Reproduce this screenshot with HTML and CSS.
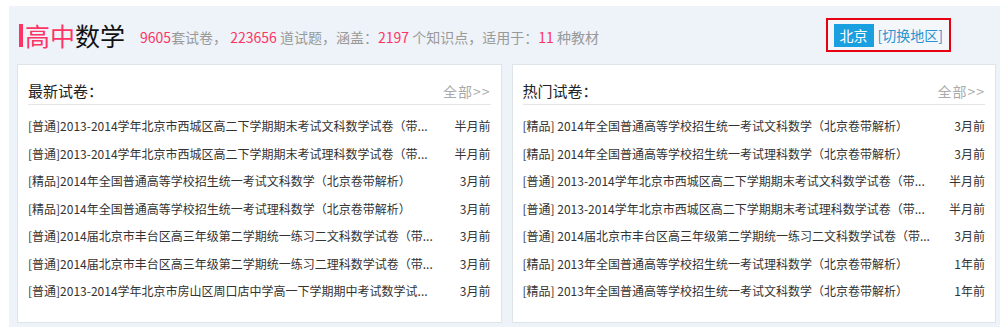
FILE: index.html
```html
<!DOCTYPE html>
<html lang="zh-CN">
<head>
    <meta charset="UTF-8">
    <title>高中数学</title>
    <link rel="stylesheet" href="styles.css">
</head>
<body>
    <div class="wrap">
        <!-- Subject header -->
        <div class="subject-head">
            <div class="subject-title">
                <span class="bar"></span>
                <h1><span class="hl">高中</span>数学</h1>
                <p class="stats">
                    <em>9605</em>套试卷， <em>223656</em> 道试题，涵盖：<em>2197</em> 个知识点，适用于：<em>11</em> 种教材
                </p>
            </div>
            <div class="region">
                <span class="region-name">北京</span>
                <a class="region-switch" href="#">[切换地区]</a>
            </div>
        </div>

        <!-- Paper lists -->
        <div class="lists">
            <div class="card">
                <div class="card-head">
                    <h2>最新试卷：</h2>
                    <a class="more" href="#">全部&gt;&gt;</a>
                </div>
                <ul class="paper-list">
                    <li><a href="#">[普通]2013-2014学年北京市西城区高二下学期期末考试文科数学试卷（带...</a><span>半月前</span></li>
                    <li><a href="#">[普通]2013-2014学年北京市西城区高二下学期期末考试理科数学试卷（带...</a><span>半月前</span></li>
                    <li><a href="#">[精品]2014年全国普通高等学校招生统一考试文科数学（北京卷带解析）</a><span>3月前</span></li>
                    <li><a href="#">[精品]2014年全国普通高等学校招生统一考试理科数学（北京卷带解析）</a><span>3月前</span></li>
                    <li><a href="#">[普通]2014届北京市丰台区高三年级第二学期统一练习二文科数学试卷（带...</a><span>3月前</span></li>
                    <li><a href="#">[普通]2014届北京市丰台区高三年级第二学期统一练习二理科数学试卷（带...</a><span>3月前</span></li>
                    <li><a href="#">[普通]2013-2014学年北京市房山区周口店中学高一下学期期中考试数学试...</a><span>3月前</span></li>
                </ul>
            </div>
            <div class="card">
                <div class="card-head">
                    <h2>热门试卷：</h2>
                    <a class="more" href="#">全部&gt;&gt;</a>
                </div>
                <ul class="paper-list">
                    <li><a href="#">[精品] 2014年全国普通高等学校招生统一考试文科数学（北京卷带解析）</a><span>3月前</span></li>
                    <li><a href="#">[精品] 2014年全国普通高等学校招生统一考试理科数学（北京卷带解析）</a><span>3月前</span></li>
                    <li><a href="#">[普通] 2013-2014学年北京市西城区高二下学期期末考试文科数学试卷（带...</a><span>半月前</span></li>
                    <li><a href="#">[普通] 2013-2014学年北京市西城区高二下学期期末考试理科数学试卷（带...</a><span>半月前</span></li>
                    <li><a href="#">[普通] 2014届北京市丰台区高三年级第二学期统一练习二文科数学试卷（带...</a><span>3月前</span></li>
                    <li><a href="#">[精品] 2013年全国普通高等学校招生统一考试理科数学（北京卷带解析）</a><span>1年前</span></li>
                    <li><a href="#">[精品] 2013年全国普通高等学校招生统一考试文科数学（北京卷带解析）</a><span>1年前</span></li>
                </ul>
            </div>
        </div>
    </div>
</body>
</html>
```

FILE: styles.css
```css
/* Basic Styling */
body {
    margin: 0;
    padding: 6px 0 0 9px;
    background-color: #fff;
    font-family: "Noto Sans CJK SC", "Noto Sans", sans-serif;
    color: #333;
}

a {
    text-decoration: none;
    color: inherit;
}

.wrap {
    background-color: #edf3f8;
    padding: 0 4px 4px 8px;
    height: 321px;
    box-sizing: border-box;
}

/* Subject header */
.subject-head {
    display: flex;
    justify-content: space-between;
    align-items: center;
    height: 58px;
    padding-right: 45px;
}

.subject-title {
    display: flex;
    align-items: center;
    padding-left: 2px;
}

.bar {
    width: 4px;
    height: 23px;
    background-color: #ff3366;
    margin-right: 2px;
}

h1 {
    margin: 0;
    font-size: 25px;
    font-weight: normal;
    line-height: 30px;
    color: #111;
}

.hl { color: #ff3366; }

.stats {
    margin: 0 0 0 15px;
    font-size: 14px;
    color: #999;
    padding-top: 3px;
}

.stats em {
    font-style: normal;
    color: #ff3366;
}

.region {
    display: flex;
    align-items: center;
    gap: 4px;
    border: 2px solid #e60012;
    padding: 4px 6px 3px 6px;
    background-color: #f4f7fa;
}

.region-name {
    background-color: #1aa0e0;
    color: #fff;
    font-size: 14px;
    line-height: 23px;
    padding: 0 6px;
}

.region-switch {
    color: #2b93d0;
    font-size: 14px;
    line-height: 23px;
}

/* Cards */
.lists {
    display: flex;
    gap: 10px;
}

.card {
    flex: 1;
    background-color: #fff;
    border: 1px solid #dfe4e8;
    height: 259px;
    box-sizing: border-box;
    padding: 15px 10px 0 10px;
}

.card-head {
    display: flex;
    justify-content: space-between;
    align-items: center;
    border-bottom: 1px solid #e6e6e6;
    padding-bottom: 3px;
}

h2 {
    margin: 0;
    font-size: 15px;
    font-weight: normal;
    line-height: 21px;
    color: #222;
}

.more {
    font-size: 14px;
    color: #aaa;
    letter-spacing: 1px;
}

.paper-list {
    list-style: none;
    margin: 7px 0 0 0;
    padding: 0;
}

.paper-list li {
    display: flex;
    justify-content: space-between;
    font-size: 12px;
    line-height: 27.5px;
    color: #333;
    white-space: nowrap;
}
```
